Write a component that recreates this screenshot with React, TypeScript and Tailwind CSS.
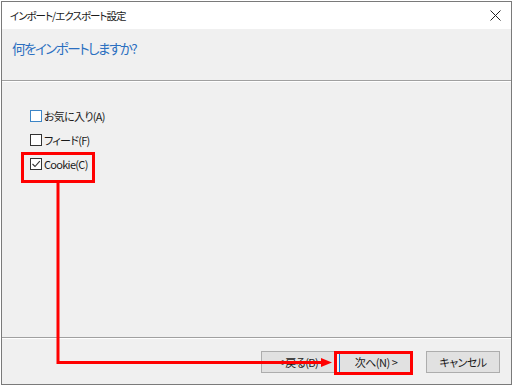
import React from "react";

const jp = "font-['Noto_Sans_CJK_JP','Noto_Sans',sans-serif] [font-feature-settings:'palt']";

function Check({ label, checked, focus }: { label: string; checked?: boolean; focus?: boolean }) {
  return (
    <div className="flex items-center h-[24px]">
      <div
        className={`w-[12px] h-[12px] border bg-white flex items-center justify-center ${
          focus ? "border-[#3d85c6]" : "border-[#333333]"
        }`}
      >
        {checked && (
          <svg width="10" height="10" viewBox="0 0 10 10">
            <path d="M1.5 5 L4 7.5 L8.8 2.2" fill="none" stroke="#333" strokeWidth="1.1" />
          </svg>
        )}
      </div>
      <span className={`ml-[2px] text-[11px] tracking-[-0.7px] text-[#1a1a1a] leading-none ${jp}`}>{label}</span>
    </div>
  );
}

function Btn({ label, def }: { label: string; def?: boolean }) {
  return (
    <div
      className={`w-[74px] h-[22px] flex items-center justify-center bg-[#e1e1e1] border text-[11px] tracking-[-0.5px] text-[#1a1a1a] ${jp} ${
        def ? "border-[#0078d7]" : "border-[#adadad]"
      }`}
    >
      {label}
    </div>
  );
}

export default function App() {
  return (
    <div className="relative w-[513px] h-[388px] bg-white overflow-hidden">
      <div className="ml-[1px] mt-[1px] w-[511px] h-[384px] border border-[#7a7a7a] flex flex-col bg-[#f0f0f0]">
        <div className="h-[27px] bg-white flex items-center justify-between pl-[8px] pr-[10px]">
          <span className={`text-[10.5px] tracking-[-1px] text-[#1a1a1a] ${jp}`}>インポート/エクスポート設定</span>
          <svg width="11" height="11" viewBox="0 0 11 11">
            <path d="M0.5 0.5 L10.5 10.5 M10.5 0.5 L0.5 10.5" stroke="#222" strokeWidth="1" />
          </svg>
        </div>
        <div className="h-[51px] pl-[10px] pt-[7px]">
          <span className={`text-[13.5px] tracking-[-1.5px] text-[#2b6fc0] ${jp}`}>何をインポートしますか?</span>
        </div>
        <div className="h-px bg-[#a0a0a0]" />
        <div className="h-px bg-white" />
        <div className="flex-1 pl-[28px] pt-[22px] flex flex-col">
          <Check label="お気に入り(A)" focus />
          <Check label="フィード(F)" />
          <Check label="Cookie(C)" checked />
        </div>
        <div className="h-px bg-[#a0a0a0]" />
        <div className="h-px bg-white" />
        <div className="h-[45px] flex justify-end pr-[11px] pt-[12px]">
          <Btn label="< 戻る(B)" />
          <div className="ml-[4px]">
            <Btn label="次へ(N) >" def />
          </div>
          <div className="ml-[13px]">
            <Btn label="キャンセル" />
          </div>
        </div>
      </div>

      <svg className="absolute left-0 top-0 pointer-events-none" width="513" height="388" viewBox="0 0 513 388">
        <rect x="22.5" y="153.5" width="71" height="28" fill="none" stroke="#ff0000" strokeWidth="3" />
        <rect x="335.5" y="352.5" width="76" height="21" fill="none" stroke="#ff0000" strokeWidth="3" />
        <path d="M58 182 L58 362.5 L323 362.5" fill="none" stroke="#ff0000" strokeWidth="3" />
        <path d="M321 358 L332 362.5 L321 367 Z" fill="#ff0000" />
      </svg>
    </div>
  );
}
